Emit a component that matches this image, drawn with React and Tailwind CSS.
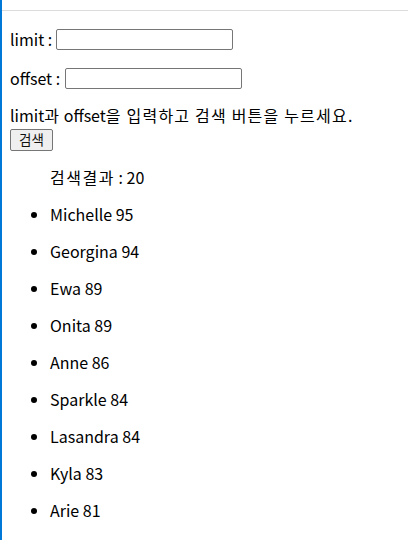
const people = [
  ['Michelle', 95],
  ['Georgina', 94],
  ['Ewa', 89],
  ['Onita', 89],
  ['Anne', 86],
  ['Sparkle', 84],
  ['Lasandra', 84],
  ['Kyla', 83],
  ['Arie', 81],
];

const font = { fontFamily: '"Noto Sans CJK KR", "Noto Sans", sans-serif' };

// Korean runs are set a little wider to match the reference's hangul advance
const Ko = ({ children }) => <span className="tracking-[1.2px]">{children}</span>;

export default function App() {
  return (
    <div
      className="min-h-[540px] w-[408px] border-l-2 border-[#0078d7] bg-white text-[16px] text-black overflow-hidden"
      style={font}
    >
      <div className="mt-[10px] h-px bg-[#dcdcdc]" />

      <div className="px-2">
        <div className="mt-[18px] flex h-[21px] items-center gap-1">
          <span className="leading-[21px]">limit :</span>
          <input className="h-[21px] w-[177px] rounded-[2px] border border-[#767676] bg-white px-1" />
        </div>

        <div className="mt-[18px] flex h-[21px] items-center gap-[5px]">
          <span className="leading-[21px]">offset :</span>
          <input className="h-[21px] w-[177px] rounded-[2px] border border-[#767676] bg-white px-1" />
        </div>

        <p className="mt-[16px] h-[21px] leading-[21px] whitespace-nowrap">
          limit<Ko>과</Ko> offset<Ko>을 입력하고 검색 버튼을 누르세요</Ko>.
        </p>
        <button className="h-[22px] w-[43px] rounded-[2px] border border-[#767676] bg-[#efefef] text-[13.5px] leading-none text-[#111]">
          검색
        </button>

        <ul className="mt-[16px] list-disc pl-[40px]">
          <p className="h-[21px] leading-[21px]">
            <span className="tracking-[1.5px]">검색결과</span> : 20
          </p>
          {people.map(([name, score]) => (
            <li key={name} className="mt-[16px] h-[21px] leading-[21px]">
              {name} {score}
            </li>
          ))}
        </ul>
      </div>
    </div>
  );
}
